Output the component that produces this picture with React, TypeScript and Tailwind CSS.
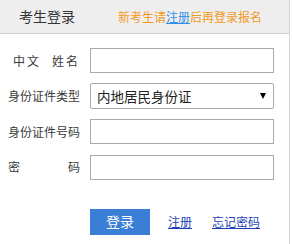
import React from "react";

const font = { fontFamily: '"Microsoft YaHei", "Noto Sans CJK SC", "Noto Sans", sans-serif' };

function Row({ label, children }: { label: React.ReactNode; children: React.ReactNode }) {
  return (
    <div className="flex items-center h-[25px]">
      <div className="w-[72px] ml-[8px] mr-[10px] flex text-[12px] text-[#3a3a3a] leading-none">{label}</div>
      {children}
    </div>
  );
}

function TextInput() {
  return <input className="w-[184px] h-[25px] border border-[#a9a9a9] bg-white outline-none px-1 text-[13px]" />;
}

export default function App() {
  return (
    <div className="w-[293px] h-[244px] bg-white" style={font}>
      <div className="w-[290px] h-full border-r border-[#d4d4d4]">
        <div className="h-[34px] bg-[#eeeeee] border-b border-[#cfcfcf] flex items-center">
          <span className="ml-[19px] text-[14px] text-[#333]">考生登录</span>
          <span className="ml-[43px] text-[12px] text-[#f39a1e]">
            新考生请<a className="text-[#2f8ee8] underline underline-offset-1">注册</a>后再登录报名
          </span>
        </div>

        <div className="mt-[14px] flex flex-col gap-[10.5px]">
          <Row
            label={
              <div className="flex w-full">
                <span className="ml-[5px]">中</span>
                <span className="ml-[2px]">文</span>
                <span className="ml-[13px]">姓</span>
                <span className="ml-[2px]">名</span>
              </div>
            }
          >
            <TextInput />
          </Row>
          <Row label={<span>身份证件类型</span>}>
            <div className="w-[184px] h-[26px] border border-[#a9a9a9] rounded-[2px] flex items-center justify-between pl-[6px] pr-[7px]">
              <span className="text-[13.5px] text-[#222]">内地居民身份证</span>
              <span className="w-0 h-0 border-l-[3.5px] border-r-[3.5px] border-t-[6px] border-l-transparent border-r-transparent border-t-black" />
            </div>
          </Row>
          <Row label={<span>身份证件号码</span>}>
            <TextInput />
          </Row>
          <Row
            label={
              <div className="flex w-full justify-between">
                <span>密</span>
                <span>码</span>
              </div>
            }
          >
            <TextInput />
          </Row>
        </div>

        <div className="mt-[29px] flex items-center">
          <button className="ml-[90px] w-[60px] h-[26px] bg-[#3a7fd5] text-white text-[14px]">登录</button>
          <a className="ml-[18px] text-[12px] text-[#1d3fb5] underline underline-offset-1">注册</a>
          <a className="ml-[20px] text-[12px] text-[#1d3fb5] underline underline-offset-1">忘记密码</a>
        </div>
      </div>
    </div>
  );
}
